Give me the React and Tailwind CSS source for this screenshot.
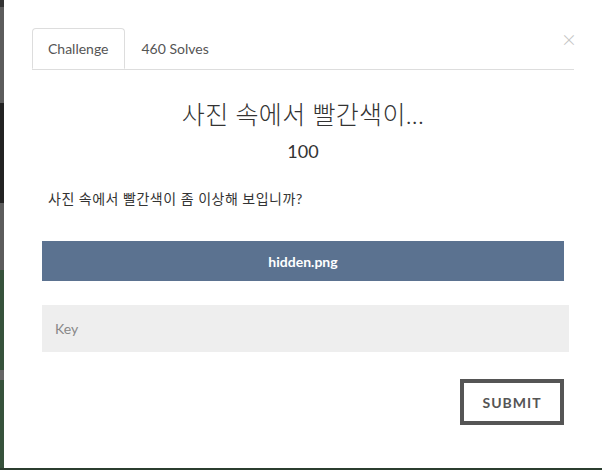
import { useState } from 'react';

const FONT = { fontFamily: 'Lato, "Noto Sans CJK KR", sans-serif' };

export default function App() {
  const [tab, setTab] = useState('challenge');
  const [key, setKey] = useState('');

  return (
    <div className="w-[602px] h-[470px] flex flex-col overflow-hidden bg-[#34503a]" style={FONT}>
      <div className="flex h-[468px]">
        {/* page behind the modal */}
        <div className="w-[4px] flex flex-col">
          <div className="h-[7px] bg-[#333333]" />
          <div className="h-[96px] bg-[#5c5c5c]" />
          <div className="h-[100px] bg-[#222222]" />
          <div className="h-[67px] bg-[#5c5c5c]" />
          <div className="h-[100px] bg-[#36523b]" />
          <div className="h-[10px] bg-[#666666]" />
          <div className="flex-1 bg-[#36523b]" />
        </div>

        <div className="flex-1 bg-white relative px-[28px] pt-[28px]">
          <button className="absolute top-[27px] right-[26px] text-[24px] leading-none text-[#c4c4c4] font-light">×</button>

          <div className="flex border-b border-[#dddddd] text-[14px] text-[#555555]">
            <div
              onClick={() => setTab('challenge')}
              className="px-[15px] h-[41px] flex items-center border border-[#dddddd] border-b-white rounded-t-[4px] -mb-px bg-white cursor-pointer"
            >
              Challenge
            </div>
            <div onClick={() => setTab('solves')} className="px-[17px] h-[41px] flex items-center cursor-pointer">
              460 Solves
            </div>
          </div>

          <div className="text-center text-[#333333] mt-[28px]">
            <h3 className="text-[25px] leading-[32px] font-light tracking-[0.3px]">사진 속에서 빨간색이...</h3>
            <div className="text-[18px] leading-[26px] mt-[8px]">100</div>
          </div>

          <p className="mt-[25px] ml-[16px] text-[14px] leading-[20px] tracking-[0.5px] text-[#333333]">
            사진 속에서 빨간색이 좀 이상해 보입니까?
          </p>

          <div className="mt-[32px] ml-[10px] mr-[10px] h-[40px] bg-[#5b7290] flex items-center justify-center text-white text-[14px] font-bold">
            hidden.png
          </div>

          <input
            value={key}
            onChange={(e) => setKey(e.target.value)}
            placeholder="Key"
            className="mt-[24px] ml-[10px] w-[527px] h-[47px] bg-[#eeeeee] px-[13px] text-[14px] text-[#555555] placeholder:text-[#888888] outline-none block"
          />

          <div className="flex justify-end mt-[27px] mr-[10px]">
            <button className="w-[104px] h-[46px] border-[4px] border-[#555555] text-[#555555] text-[14px] font-bold tracking-[1px]">
              SUBMIT
            </button>
          </div>
        </div>
      </div>
      <div className="h-[2px] bg-[#2b3d2f]" />
    </div>
  );
}
